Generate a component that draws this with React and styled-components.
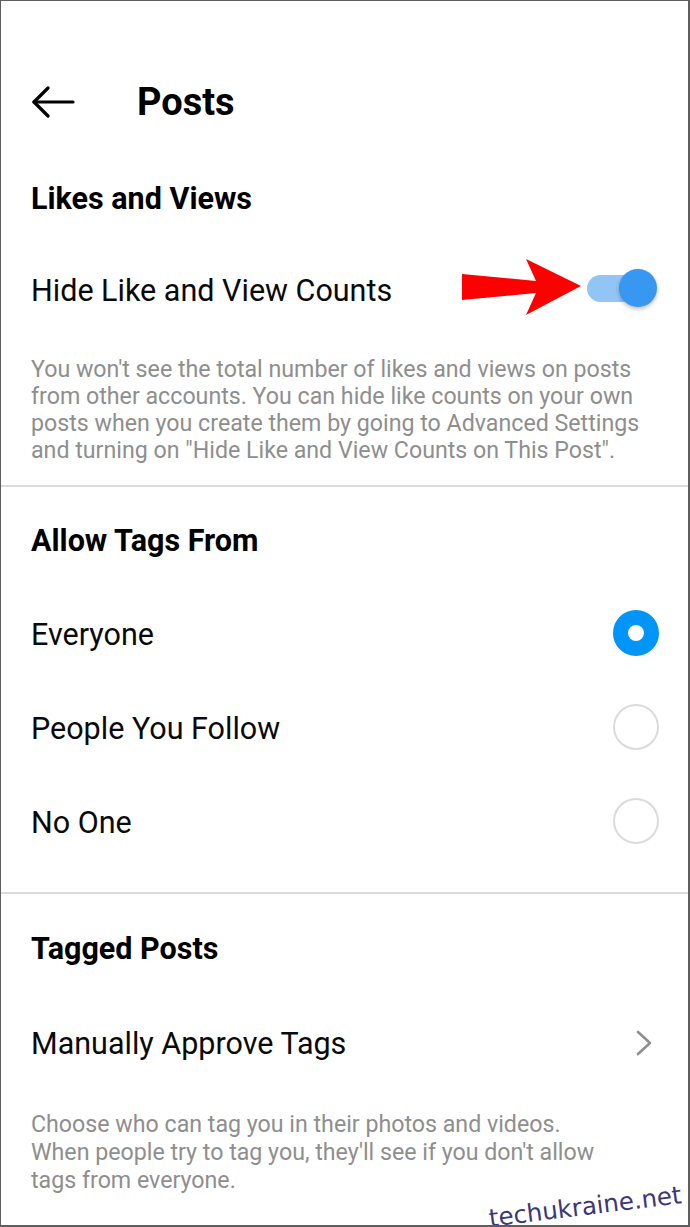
import React from 'react';
import styled, { createGlobalStyle } from 'styled-components';

const GlobalStyle = createGlobalStyle`
  html, body {
    margin: 0;
    padding: 0;
    background: #fff;
  }
  body {
    font-family: Roboto, "Noto Sans", "Liberation Sans", sans-serif;
    color: #000;
  }
`;

const Frame = styled.div`
  position: relative;
  width: 690px;
  height: 1227px;
  box-sizing: border-box;
  border-style: solid;
  border-color: #5e5e5e;
  border-width: 1px 2px 2px 1px;
  overflow: hidden;
  background: #fff;
`;

const Header = styled.header`
  height: 169px;
  padding: 32px 0 0 30px;
  box-sizing: border-box;
  display: flex;
  align-items: center;
  gap: 62px;
`;

const BackIcon = styled.svg`
  width: 44px;
  height: 32px;
  flex: none;
`;

const PageTitle = styled.h1`
  margin: 0;
  font-size: 38px;
  font-weight: 700;
  line-height: 1;
`;

const Section = styled.section`
  padding: ${p => p.$top}px 0 ${p => p.$bottom}px;
`;

const Divider = styled.div`
  height: 2px;
  background: #dbdbdb;
`;

const SectionTitle = styled.h2`
  margin: 0;
  height: 56px;
  padding-left: 30px;
  display: flex;
  align-items: center;
  font-size: 30.5px;
  font-weight: 700;
`;

const Row = styled.div`
  height: ${p => p.$height}px;
  padding: 0 ${p => p.$right}px 0 30px;
  margin-top: ${p => p.$gap || 0}px;
  display: flex;
  align-items: center;
`;

const Label = styled.span`
  flex: 1;
  font-size: 30.5px;
  font-weight: 400;
  color: #0a0a0a;
`;

const Pointer = styled.svg`
  width: 122px;
  height: 58px;
  flex: none;
  margin-right: 4px;
  margin-bottom: 4px;
`;

const Toggle = styled.div`
  position: relative;
  width: 70px;
  height: 38px;
  flex: none;
  margin-bottom: 5px;
`;

const Track = styled.div`
  position: absolute;
  left: 0;
  top: 6px;
  width: 62px;
  height: 27px;
  border-radius: 14px;
  background: #92c5f6;
`;

const Knob = styled.div`
  position: absolute;
  right: 0;
  top: 0;
  width: 38px;
  height: 38px;
  border-radius: 50%;
  background: #3897f0;
  box-shadow: 0 2px 4px rgba(0, 0, 0, 0.28);
`;

const Radio = styled.span`
  width: 46px;
  height: 46px;
  flex: none;
  box-sizing: border-box;
  border-radius: 50%;
  border: ${p => (p.$checked ? '15px solid #0095f6' : '2px solid #dbdbdb')};
  background: #fff;
  margin-bottom: 2px;
`;

const Chevron = styled.svg`
  width: 16px;
  height: 26px;
  flex: none;
`;

const Help = styled.p`
  margin: 0;
  padding: ${p => p.$top}px ${p => p.$right}px 0 30px;
  font-size: 23.2px;
  line-height: ${p => p.$lh}px;
  color: #8e8e8e;
`;

const Watermark = styled.div`
  position: absolute;
  right: 5px;
  bottom: 18px;
  font-family: "DejaVu Sans", Verdana, sans-serif;
  font-size: 24.5px;
  line-height: 1;
  color: #3b3778;
  transform: rotate(-7deg);
  transform-origin: right bottom;
  white-space: nowrap;
`;

const tagOptions = [
  { label: 'Everyone', checked: true },
  { label: 'People You Follow', checked: false },
  { label: 'No One', checked: false },
];

export default function App() {
  return (
    <>
      <GlobalStyle />
      <Frame>
        <Header>
          <BackIcon viewBox="0 0 44 32" fill="none" stroke="#000" strokeWidth="3.2" strokeLinecap="round" strokeLinejoin="round">
            <path d="M3 16 H42" />
            <path d="M17 2 L3 16 L17 30" />
          </BackIcon>
          <PageTitle>Posts</PageTitle>
        </Header>

        <Section $top={0} $bottom={21}>
          <SectionTitle>Likes and Views</SectionTitle>
          <Row $height={128} $right={31}>
            <Label>Hide Like and View Counts</Label>
            <Pointer viewBox="0 0 122 58">
              <polygon
                points="1,15 75,22 65,0 120,27 65,56 75,34 1,41"
                fill="#ff0000"
              />
            </Pointer>
            <Toggle>
              <Track />
              <Knob />
            </Toggle>
          </Row>
          <Help $top={2} $lh={27} $right={31}>
            You won't see the total number of likes and views on posts from other accounts. You can hide like counts on your own posts when you create them by going to Advanced Settings and turning on "Hide Like and View Counts on This Post".
          </Help>
        </Section>

        <Divider />

        <Section $top={25} $bottom={23}>
          <SectionTitle>Allow Tags From</SectionTitle>
          {tagOptions.map((o, i) => (
            <Row key={o.label} $height={94} $right={29} $gap={i === 0 ? 19 : 0}>
              <Label>{o.label}</Label>
              <Radio $checked={o.checked} />
            </Row>
          ))}
        </Section>

        <Divider />

        <Section $top={26} $bottom={0}>
          <SectionTitle>Tagged Posts</SectionTitle>
          <Row $height={94} $right={36} $gap={20}>
            <Label>Manually Approve Tags</Label>
            <Chevron viewBox="0 0 16 26" fill="none" stroke="#8e8e8e" strokeWidth="2.6" strokeLinecap="round" strokeLinejoin="round">
              <path d="M2 2 L14 13 L2 24" />
            </Chevron>
          </Row>
          <Help $top={20} $lh={28} $right={80}>
            Choose who can tag you in their photos and videos. When people try to tag you, they'll see if you don't allow tags from everyone.
          </Help>
        </Section>

        <Watermark>techukraine.net</Watermark>
      </Frame>
    </>
  );
}
